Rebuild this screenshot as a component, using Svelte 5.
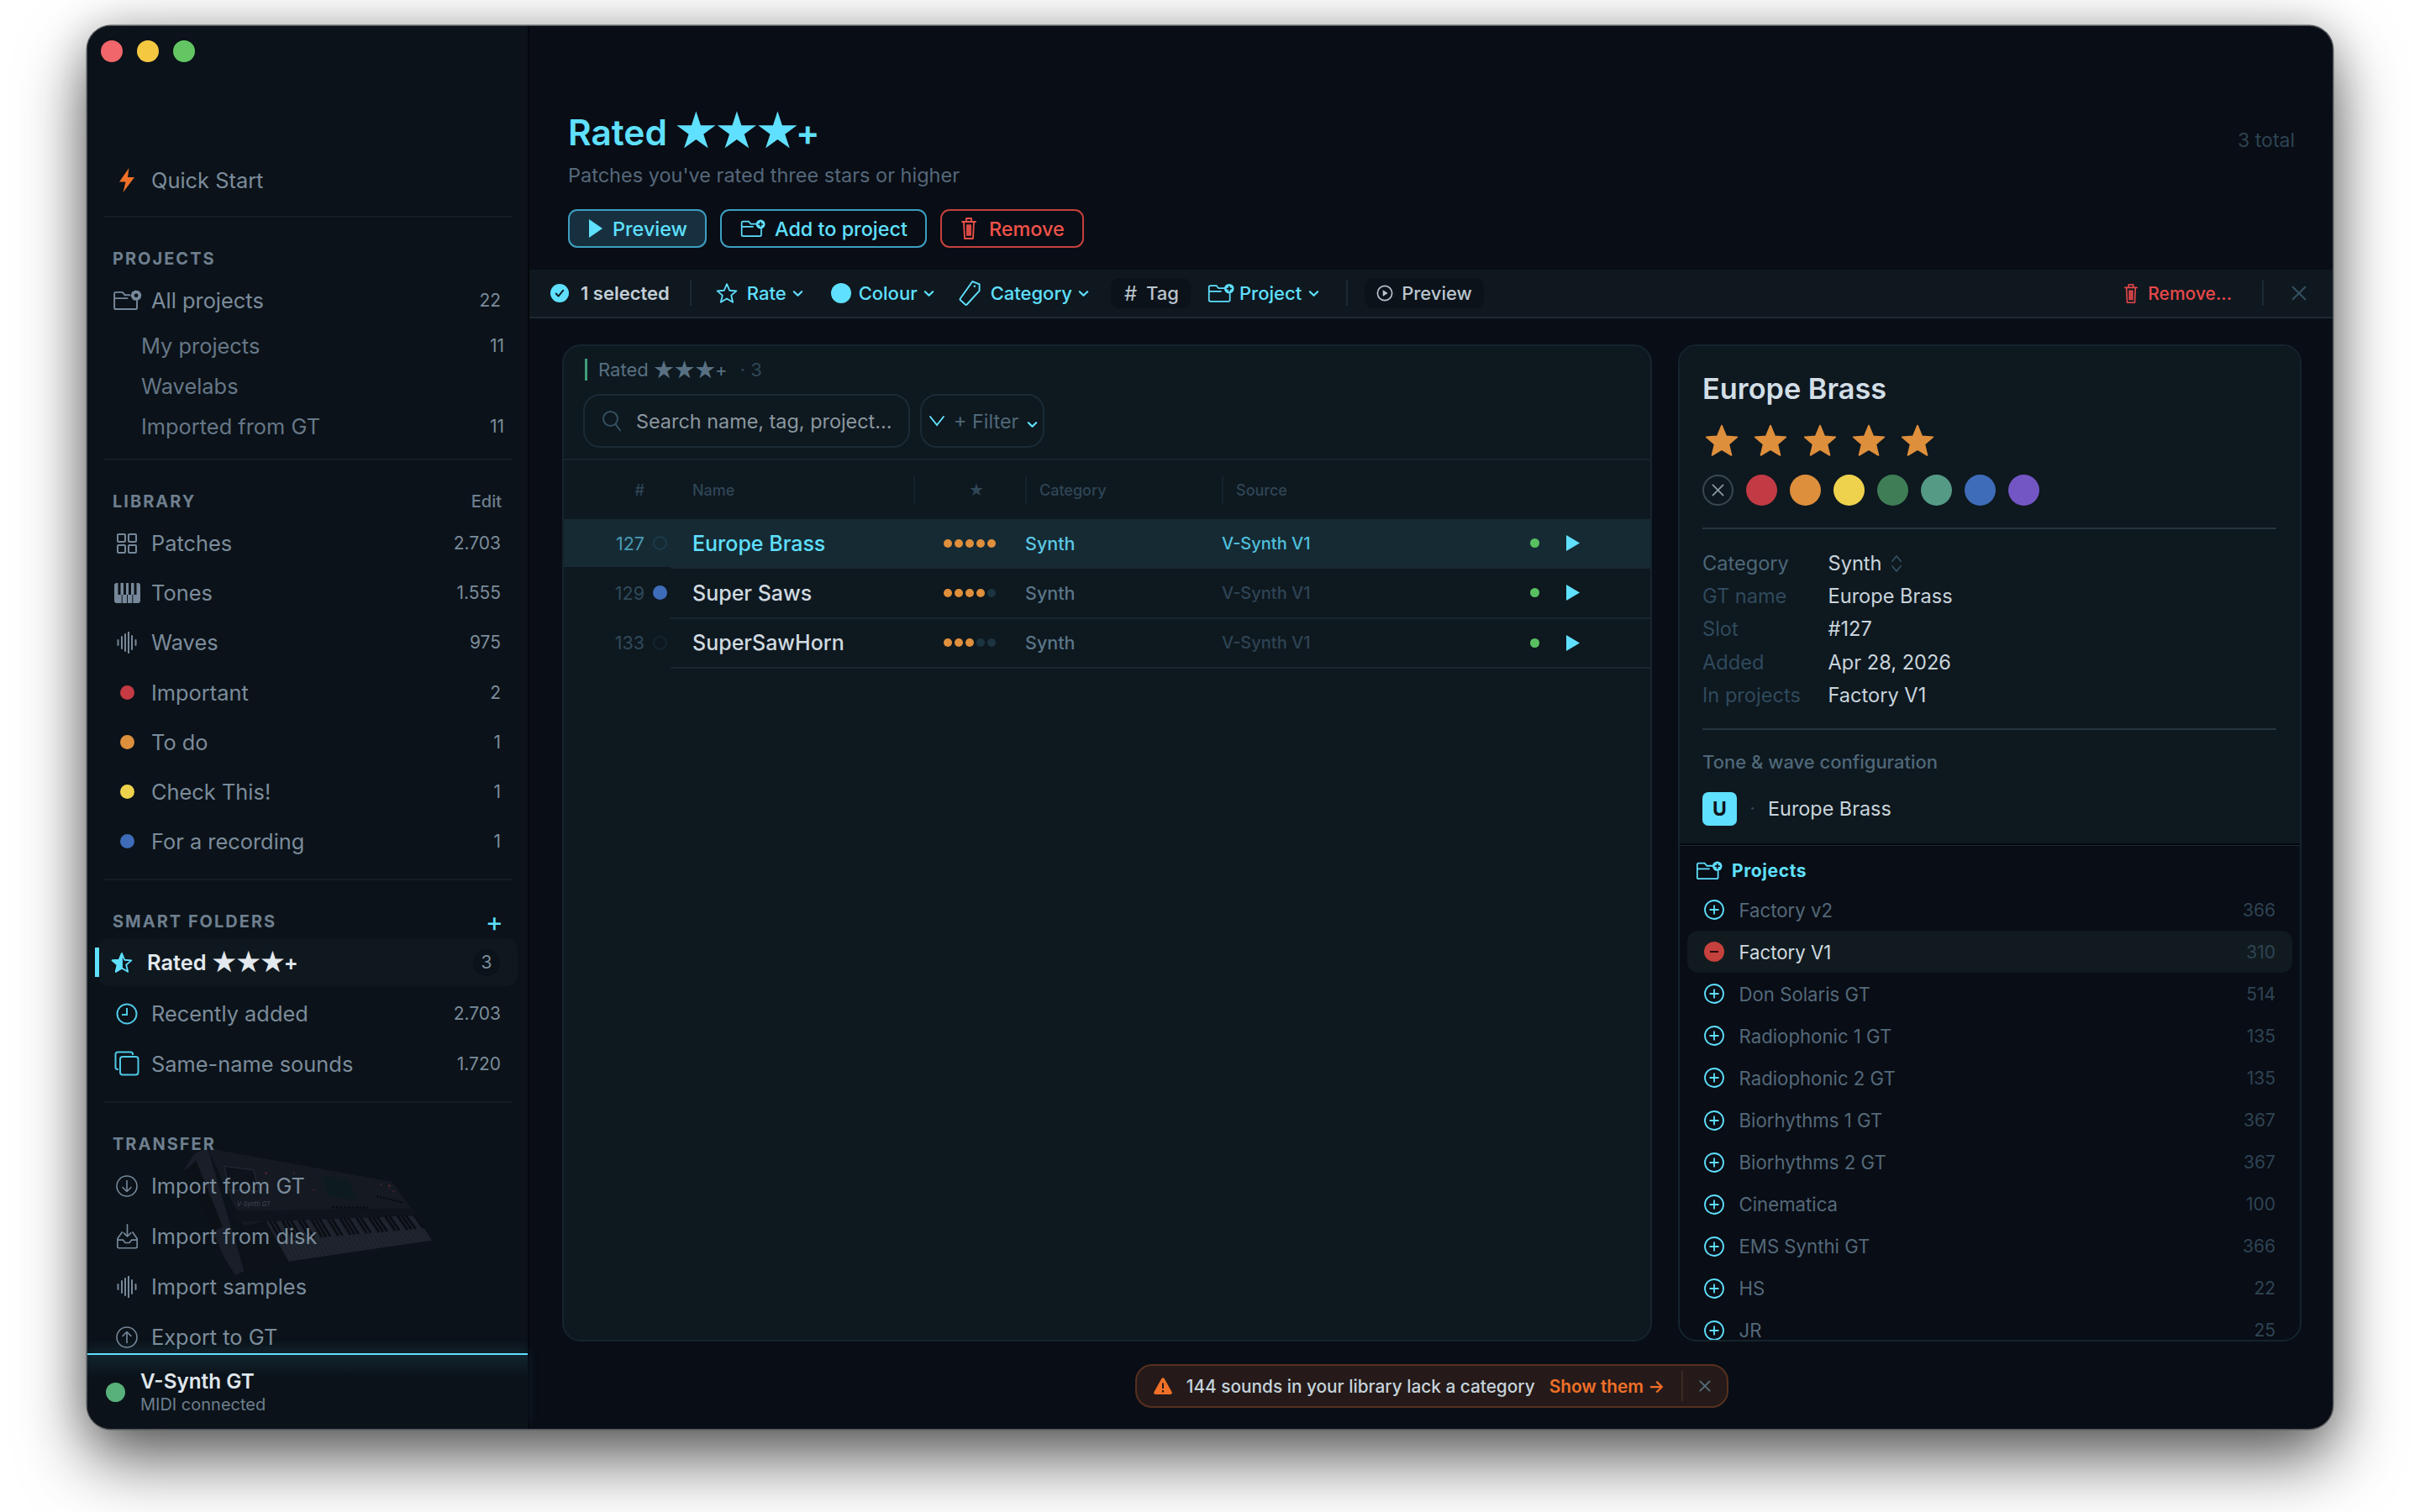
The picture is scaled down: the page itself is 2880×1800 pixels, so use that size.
<script>
	const projects = [
		{ name: 'My projects', count: '11' },
		{ name: 'Wavelabs', count: '' },
		{ name: 'Imported from GT', count: '11' }
	];
	const library = [
		{ name: 'Patches', count: '2.703', icon: 'grid' },
		{ name: 'Tones', count: '1.555', icon: 'piano' },
		{ name: 'Waves', count: '975', icon: 'wave' },
		{ name: 'Important', count: '2', dot: '#c63a44' },
		{ name: 'To do', count: '1', dot: '#de8f3c' },
		{ name: 'Check This!', count: '1', dot: '#eed24e' },
		{ name: 'For a recording', count: '1', dot: '#3f6cb8' }
	];
	const transfer = [
		{ name: 'Import from GT', icon: 'down' },
		{ name: 'Import from disk', icon: 'inbox' },
		{ name: 'Import samples', icon: 'wave' },
		{ name: 'Export to GT', icon: 'up' }
	];
	const patches = [
		{ slot: 127, name: 'Europe Brass', stars: 5, tag: '', active: true },
		{ slot: 129, name: 'Super Saws', stars: 4, tag: '#3f6cb8', active: false },
		{ slot: 133, name: 'SuperSawHorn', stars: 3, tag: '', active: false }
	];
	const swatches = ['#c23a44', '#de8f3c', '#eed24e', '#3f7d57', '#559a85', '#3f6cb8', '#7356c4'];
	const facts = [
		['Category', 'Synth'],
		['GT name', 'Europe Brass'],
		['Slot', '#127'],
		['Added', 'Apr 28, 2026'],
		['In projects', 'Factory V1']
	];
	const projectRows = [
		['Factory v2', 366],
		['Factory V1', 310],
		['Don Solaris GT', 514],
		['Radiophonic 1 GT', 135],
		['Radiophonic 2 GT', 135],
		['Biorhythms 1 GT', 367],
		['Biorhythms 2 GT', 367],
		['Cinematica', 100],
		['EMS Synthi GT', 366],
		['HS', 22],
		['JR', 25]
	];
	const blackKeys = Array.from({ length: 36 }, (_, i) => i).filter((i) => i % 7 !== 2 && i % 7 !== 6);
	const whiteKeys = Array.from({ length: 36 }, (_, i) => i);
</script>

{#snippet star(points = '12 2 15 9 22.5 9.6 16.8 14.4 18.6 22 12 18 5.4 22 7.2 14.4 1.5 9.6 9 9')}
	<polygon {points} />
{/snippet}

{#snippet chevron()}
	<svg class="chev" width="13" height="9" viewBox="0 0 14 9" fill="none" stroke="currentColor" stroke-width="2.4" stroke-linecap="round" stroke-linejoin="round"><path d="M2 2l5 5 5-5" /></svg>
{/snippet}

{#snippet cross(size, color)}
	<svg width={size} height={size} viewBox="0 0 16 16" fill="none" stroke={color} stroke-width="1.900" stroke-linecap="round"><path d="M1.500 1.500l13 13M14.500 1.500l-13 13" /></svg>
{/snippet}

{#snippet folder(w, h, badge)}
	<svg class="fold" width={w} height={h} viewBox="0 0 36 26" fill="none" stroke="currentColor" stroke-width="2">
		<path d="M2 5a2 2 0 0 1 2-2h8l3 3.5h9M30 14v8a2 2 0 0 1-2 2H4a2 2 0 0 1-2-2V5M2 10.5h16" stroke-linecap="round" />
		<circle cx="29" cy="7" r="6.5" fill="currentColor" stroke="none" />
		{#if badge === 'plus'}
			<path d="M29 3.6v6.8M25.6 7h6.8" stroke="#0b1219" stroke-width="2" />
		{:else}
			<circle cx="29" cy="7" r="2.4" fill="#0b1219" stroke="none" />
			<circle cx="29" cy="7" r="7" fill="none" stroke="#0b1219" stroke-width="1.2" stroke-dasharray="2 3.5" />
		{/if}
	</svg>
{/snippet}

{#snippet waveIcon()}
	<svg width="24" height="26" viewBox="0 0 24 26" fill="none" stroke="currentColor" stroke-width="2" stroke-linecap="round">
		<path d="M1.5 10v6M6 6v14M10 3v20M14 0.5v25M18 5v16M22.5 10v6" />
	</svg>
{/snippet}

{#snippet trash(w, h)}
	<svg width={w} height={h} viewBox="0 0 20 28" fill="none" stroke="currentColor" stroke-width="2" stroke-linejoin="round" stroke-linecap="round">
		<path d="M2 6h16M7 6V2h6v4M4 6l1 20h10l1-20M8 10v12M10 10v12M12 10v12" stroke-width="1.8" />
	</svg>
{/snippet}

{#snippet navIcon(name)}
	{#if name === 'grid'}
		<svg width="24" height="24" viewBox="0 0 24 24" fill="none" stroke="currentColor" stroke-width="2"><rect x="1" y="1" width="9" height="9" rx="1" /><rect x="14" y="1" width="9" height="9" rx="1" /><rect x="1" y="14" width="9" height="9" rx="1" /><rect x="14" y="14" width="9" height="9" rx="1" /></svg>
	{:else if name === 'piano'}
		<svg width="31" height="24" viewBox="0 0 31 24"><rect width="31" height="24" rx="3" fill="currentColor" /><path d="M6 0v14M12.5 0v14M18.5 0v14M25 0v14" stroke="#0b1219" stroke-width="3" /><path d="M9.2 14v10M15.5 14v10M21.8 14v10" stroke="#0b1219" stroke-width="1" /></svg>
	{:else if name === 'wave'}
		{@render waveIcon()}
	{:else if name === 'clock'}
		<svg width="26" height="26" viewBox="0 0 26 26" fill="none" stroke="currentColor" stroke-width="2"><circle cx="13" cy="13" r="11.5" /><path d="M13 6v8H7" /></svg>
	{:else if name === 'copies'}
		<svg width="30" height="30" viewBox="0 0 30 30" fill="none" stroke="currentColor" stroke-width="2"><path d="M5 22H4a2.5 2.5 0 0 1-2.5-2.5V4A2.5 2.5 0 0 1 4 1.5h15.5A2.5 2.5 0 0 1 22 4v1" /><rect x="7" y="7" width="21.5" height="21.5" rx="3" /></svg>
	{:else if name === 'down' || name === 'up'}
		<svg width="26" height="26" viewBox="0 0 26 26" fill="none" stroke="currentColor" stroke-width="1.6" stroke-linecap="round" stroke-linejoin="round"><circle cx="13" cy="13" r="12" /><path d={name === 'down' ? 'M13 6.5v13M8 14.5l5 5 5-5' : 'M13 19.5v-13M8 11.5l5-5 5 5'} /></svg>
	{:else if name === 'inbox'}
		<svg width="31" height="30" viewBox="0 0 31 36" fill="none" stroke="currentColor" stroke-width="2" stroke-linejoin="round" stroke-linecap="round"><path d="M15.5 1v17M10.5 13l5 5 5-5M8 12L1.500 21v11.500a2 2 0 0 0 2 2h24a2 2 0 0 0 2-2V21l-6.500-9M1.500 23h8l3 4h6l3-4h8" /></svg>
	{/if}
{/snippet}

<div class="window">
	<aside class="sidebar">
		<svg class="synth" width="330" height="190" viewBox="0 0 990 570" aria-hidden="true">
			<polygon points="140,50 800,170 885,290 350,312 270,330" fill="#151a23" />
			<polygon points="58,125 95,70 140,48 272,490 240,505 200,440" fill="#1b202a" />
			<polygon points="60,130 100,95 195,330 160,350" fill="#0d1118" />
			<polygon points="270,330 350,312 430,455 272,490" fill="#0e1219" />
			<polygon points="350,312 885,290 942,380 430,455" fill="#222731" />
			<polygon points="230,275 880,265 885,292 350,312 240,312" fill="#10141c" />
			<polygon points="200,115 305,128 325,205 220,200" fill="#0f141c" stroke="#2a303b" stroke-width="3" />
			<polygon points="550,150 645,165 670,235 575,222" fill="#0e1c20" />
			<g stroke="#171c25" stroke-width="2">
				{#each whiteKeys as i}
					<line x1={356 + i * 14.7} y1={311 - i * 0.6} x2={432 + i * 14.4} y2={453 - i * 2} />
				{/each}
			</g>
			<g stroke="#0a0d13" stroke-width="8">
				{#each blackKeys as i}
					<line x1={364 + i * 14.7} y1={311 - i * 0.6} x2={405 + i * 14.5} y2={382 - i * 1.3} />
				{/each}
			</g>
			<g fill="#5b2a30">
				<circle cx="350" cy="140" r="4" /><circle cx="450" cy="140" r="3" /><circle cx="520" cy="200" r="3" /><circle cx="790" cy="185" r="4" /><circle cx="805" cy="205" r="3" /><circle cx="760" cy="180" r="3" />
			</g>
			<g stroke="#070a0f" stroke-width="7">
				<line x1="585" y1="262" x2="715" y2="264" stroke-dasharray="8 6" />
				<line x1="745" y1="222" x2="840" y2="245" stroke-dasharray="6 6" />
			</g>
			<text x="245" y="258" fill="#4a505c" font-family="Inter, sans-serif" font-size="22" font-style="italic">V-Synth GT</text>
		</svg>

		<nav class="nav">
			<div class="traffic"><span class="red"></span><span class="amber"></span><span class="green"></span></div>
			<div class="row quick">
				<span class="ico">
					<svg width="18" height="29" viewBox="0 0 18 29"><polygon points="11.500,0 0,16.500 7.500,16.500 4.500,29 18,11 10,11" fill="#f07028" /></svg>
				</span>
				<span class="label">Quick Start</span>
			</div>
			<div class="rule"></div>

			<div class="head first"><span>PROJECTS</span></div>
			<div class="row allp">
				<span class="ico">{@render folder(35, 25, 'gear')}</span>
				<span class="label">All projects</span>
				<span class="count">22</span>
			</div>
			{#each projects as p}
				<div class="row sub">
					<span class="label">{p.name}</span>
					<span class="count">{p.count}</span>
				</div>
			{/each}
			<div class="rule"></div>

			<div class="head"><span>LIBRARY</span><span class="edit">Edit</span></div>
			{#each library as item}
				<div class="row">
					<span class="ico">
						{#if item.dot}
							<span class="dot" style="background:{item.dot}"></span>
						{:else}
							{@render navIcon(item.icon)}
						{/if}
					</span>
					<span class="label">{item.name}</span>
					<span class="count">{item.count}</span>
				</div>
			{/each}
			<div class="rule"></div>

			<div class="head"><span>SMART FOLDERS</span><span class="plus">+</span></div>
			<div class="row rated">
				<span class="bar"></span>
				<svg class="rated-ico" width="26" height="26" viewBox="0 0 24 24" fill="none" stroke="currentColor" stroke-width="1.700" stroke-linejoin="round">
					<polygon points="12 2 12 18 5.400 22 7.200 14.400 1.500 9.600 9 9" fill="currentColor" />
					{@render star()}
				</svg>
				<span class="label">Rated <span class="st st-side">★★★</span>+</span>
				<span class="pill">3</span>
			</div>
			<div class="row">
				<span class="ico cyan">{@render navIcon('clock')}</span>
				<span class="label">Recently added</span>
				<span class="count">2.703</span>
			</div>
			<div class="row">
				<span class="ico cyan">{@render navIcon('copies')}</span>
				<span class="label">Same-name sounds</span>
				<span class="count">1.720</span>
			</div>
			<div class="rule"></div>

			<div class="head"><span>TRANSFER</span></div>
			{#each transfer as item}
				<div class="row tall">
					<span class="ico">{@render navIcon(item.icon)}</span>
					<span class="label">{item.name}</span>
				</div>
			{/each}
		</nav>

		<footer class="device">
			<span class="led"></span>
			<div>
				<div class="device-name">V-Synth GT</div>
				<div class="device-state">MIDI connected</div>
			</div>
		</footer>
	</aside>

	<main class="main">
		<header class="top">
			<div>
				<h1>Rated <span class="st st-title">★★★</span>+</h1>
				<p class="sub-title">Patches you've rated three stars or higher</p>
				<div class="actions">
					<button class="btn primary">
						<svg width="18" height="24" viewBox="0 0 18 24"><polygon points="1,1 17,12 1,23" fill="currentColor" /></svg>
						Preview
					</button>
					<button class="btn">{@render folder(30, 22, 'plus')} Add to project</button>
					<button class="btn danger">{@render trash(20, 28)} Remove</button>
				</div>
			</div>
			<span class="total">3 total</span>
		</header>

		<div class="toolbar">
			<svg width="22" height="22" viewBox="0 0 23 23"><circle cx="11.500" cy="11.500" r="11.500" fill="#5fe0ff" /><path d="M7 12l3 3.200L16 8" fill="none" stroke="#0e181f" stroke-width="2" stroke-linecap="round" stroke-linejoin="round" /></svg>
			<span class="selected">1 selected</span>
			<span class="sep"></span>
			<span class="tool t-rate">
				<svg width="26" height="26" viewBox="0 0 24 24" fill="none" stroke="currentColor" stroke-width="1.700" stroke-linejoin="round">{@render star()}</svg>
				Rate {@render chevron()}
			</span>
			<span class="tool t-colour"><span class="swatch"></span>Colour {@render chevron()}</span>
			<span class="tool t-cat">
				<svg width="27" height="32" viewBox="0 0 28 32" fill="none" stroke="currentColor" stroke-width="2" stroke-linejoin="round"><path d="M17 1.500l8.500 3.500v8L10 30a1.500 1.500 0 0 1-2 0l-6-5.500a1.500 1.500 0 0 1 0-2z" /><circle cx="19.500" cy="7.500" r="1.300" fill="currentColor" stroke="none" /></svg>
				Category {@render chevron()}
			</span>
			<span class="tool chip t-tag"><span class="hash">#</span>Tag</span>
			<span class="tool t-proj">{@render folder(32, 24, 'plus')}Project {@render chevron()}</span>
			<span class="sep s2"></span>
			<span class="tool chip t-prev">
				<svg width="20" height="20" viewBox="0 0 22 22" fill="none" stroke="currentColor" stroke-width="1.800"><circle cx="11" cy="11" r="9.500" /><polygon points="8.500,6.800 15,11 8.500,15.200" fill="currentColor" stroke="none" /></svg>
				Preview
			</span>
			<span class="tool t-remove">{@render trash(18, 25)} Remove...</span>
			<span class="sep s3"></span>
			<span class="close">{@render cross(18, '#33505f')}</span>
		</div>

		<div class="content">
			<div class="panes">
				<section class="card list">
					<div class="crumb"><span class="crumb-bar"></span>Rated <span class="st st-crumb">★★★</span>+ <span class="crumb-n">· 3</span></div>
					<div class="search-row">
						<div class="search">
							<svg width="24" height="26" viewBox="0 0 24 26" fill="none" stroke="#33505f" stroke-width="2" stroke-linecap="round"><circle cx="10.500" cy="10.500" r="8.500" /><path d="M17 17.500l5 7" /></svg>
							<span>Search name, tag, project...</span>
						</div>
						<div class="filter">
							<svg width="20" height="14" viewBox="0 0 20 14" fill="none" stroke="#5fe0ff" stroke-width="2" stroke-linecap="round"><path d="M2 2l8 10 8-10" /></svg>
							<span>+ Filter</span>
							<span class="cyan">{@render chevron()}</span>
						</div>
					</div>
					<div class="thead">
						<span class="th-n">#</span>
						<span class="th-name">Name</span>
						<span class="th sep-l th-star"><span class="st">★</span></span>
						<span class="th sep-l">Category</span>
						<span class="th sep-l">Source</span>
					</div>
					{#each patches as p}
						<div class="patch" class:active={p.active}>
							<span class="slot">{p.slot}</span>
							<span class="tag-cell">
								<span class="tag-dot" class:ring={!p.tag} style={p.tag ? `background:${p.tag}` : ''}></span>
							</span>
							<span class="pname">{p.name}</span>
							<span class="rating">
								{#each [1, 2, 3, 4, 5] as n}
									<span class="pip" class:on={n <= p.stars}></span>
								{/each}
							</span>
							<span class="pcat">Synth</span>
							<span class="psource">V-Synth V1</span>
							<span class="online"></span>
							<svg width="16" height="19" viewBox="0 0 16 19"><polygon points="0,0 16,9.500 0,19" fill="#5fe0ff" /></svg>
						</div>
					{/each}
				</section>

				<section class="card detail">
					<div class="detail-top">
						<h2>Europe Brass</h2>
						<div class="stars">
							{#each [1, 2, 3, 4, 5] as n}
								<svg width="42" height="40" viewBox="0 0 24 23" fill="#de8f3c" stroke="#de8f3c" stroke-width="1" stroke-linejoin="round">{@render star('12 1.500 15 8.800 22.500 9.400 16.800 14.300 18.600 21.800 12 17.800 5.400 21.800 7.200 14.300 1.500 9.400 9 8.800')}</svg>
							{/each}
						</div>
						<div class="swatches">
							<span class="sw none">{@render cross(15, '#8a97a0')}</span>
							{#each swatches as c}
								<span class="sw" style="background:{c}"></span>
							{/each}
						</div>
						<div class="hr"></div>
						<dl class="facts">
							{#each facts as [k, v], i}
								<div class="fact">
									<dt class:lit={i === 0}>{k}</dt>
									<dd>
										{v}
										{#if i === 0}
											<svg width="14" height="22" viewBox="0 0 14 22" fill="none" stroke="#33505f" stroke-width="1.800" stroke-linecap="round" stroke-linejoin="round"><path d="M2 8l5-6 5 6M2 14l5 6 5-6" /></svg>
										{/if}
									</dd>
								</div>
							{/each}
						</dl>
						<div class="hr second"></div>
						<div class="tone-title">Tone &amp; wave configuration</div>
						<div class="tone">
							<span class="badge">U</span>
							<span class="mid">·</span>
							<span>Europe Brass</span>
						</div>
					</div>
					<div class="detail-projects">
						<div class="proj-head">{@render folder(32, 23, 'plus')}<span>Projects</span></div>
						{#each projectRows as [name, n], i}
							<div class="proj" class:in={i === 1}>
								{#if i === 1}
									<svg width="24" height="24" viewBox="0 0 24 24"><circle cx="12" cy="12" r="12" fill="#c5413d" /><path d="M7 12h10" stroke="#2a0c0c" stroke-width="2" /></svg>
								{:else}
									<svg width="24" height="24" viewBox="0 0 24 24" fill="none" stroke="#5fe0ff" stroke-width="1.800"><circle cx="12" cy="12" r="11" /><path d="M12 6.500v11M6.500 12h11" /></svg>
								{/if}
								<span class="proj-name">{name}</span>
								<span class="proj-n">{n}</span>
							</div>
						{/each}
					</div>
				</section>
			</div>

			<div class="toast">
				<svg width="22" height="20" viewBox="0 0 22 20"><path d="M9.300 1.200a2 2 0 0 1 3.400 0l8.800 15.800A2 2 0 0 1 19.800 20H2.200a2 2 0 0 1-1.700-3z" fill="#f07028" /><path d="M11 6.500v6.500M11 15v2.500" stroke="#251a19" stroke-width="2" /></svg>
				<span class="toast-text">144 sounds in your library lack a category</span>
				<span class="toast-link">Show them →</span>
				<span class="toast-sep"></span>
				<span class="toast-x">{@render cross(14, '#56707f')}</span>
			</div>
		</div>
	</main>
</div>

<style>
	:global(body) {
		margin: 0;
		background: #fff;
		height: 1800px;
		overflow: hidden;
		font-family: Inter, 'Noto Sans', sans-serif;
	}

	.window {
		display: flex;
		box-sizing: border-box;
		width: 2672px;
		height: 1670px;
		margin: 31px 0 0 104px;
		border-radius: 28px;
		overflow: hidden;
		background: #090d15;
		box-shadow:
			0 0 0 1.5px #55585c,
			0 36px 80px rgba(0, 0, 0, 0.62),
			0 0 50px rgba(0, 0, 0, 0.2);
	}

	/* star glyphs come from DejaVu, Inter's are too small */
	.st {
		font-family: 'DejaVu Sans', sans-serif;
		font-weight: 400;
		line-height: 0;
	}

	.st-title {
		font-size: 60px;
		letter-spacing: -5.3px;
		vertical-align: -3px;
		margin-left: -3px;
	}

	.st-side {
		font-size: 35px;
		letter-spacing: -2.5px;
		vertical-align: -2px;
		margin-left: -1px;
	}

	.st-crumb {
		font-size: 29px;
		letter-spacing: -1.3px;
		vertical-align: -2px;
		margin-left: -1px;
	}

	/* sidebar */
	.sidebar {
		position: relative;
		flex: none;
		display: flex;
		flex-direction: column;
		box-sizing: border-box;
		width: 526px;
		background: #0b1219;
		border-right: 2px solid #04070b;
		color: #76889a;
	}

	.synth {
		position: absolute;
		left: 96px;
		top: 1319px;
		opacity: 0.9;
		pointer-events: none;
	}

	.nav {
		position: relative;
		flex: 1;
		min-height: 0;
		overflow: hidden;
		box-sizing: border-box;
		padding: 17px 28px 0 30px;
	}

	.traffic {
		display: flex;
		gap: 17px;
		height: 26px;
		margin: 0 0 112px -14px;
	}

	.traffic span {
		width: 26px;
		height: 26px;
		border-radius: 50%;
	}

	.red {
		background: #f0666a;
	}

	.amber {
		background: #f5c842;
	}

	.green {
		background: #63c663;
	}

	.row {
		display: flex;
		align-items: center;
		height: 59.2px;
		padding-right: 4px;
		font-size: 25.4px;
		color: #7b8c9b;
	}

	.quick {
		height: 56px;
		margin-bottom: 1px;
	}

	.allp {
		height: 60px;
		margin-top: 5px;
	}

	.sub {
		height: 48px;
		padding-left: 34px;
		padding-right: 0;
		color: #667787;
	}

	.tall {
		height: 60px;
	}

	.ico {
		flex: none;
		display: flex;
		align-items: center;
		justify-content: center;
		width: 34px;
		margin-right: 12px;
		color: #76889a;
	}

	.ico.cyan {
		color: #4fc8e6;
	}

	.label {
		flex: 1;
		white-space: nowrap;
	}

	.count {
		font-size: 21px;
		color: #7b8c9b;
	}

	.dot {
		width: 17px;
		height: 17px;
		border-radius: 50%;
	}

	.rule {
		height: 2px;
		margin: 15px -10px 0 -11px;
		background: #141c24;
	}

	.head {
		display: flex;
		align-items: center;
		justify-content: space-between;
		box-sizing: border-box;
		height: 30px;
		margin: 33px 0 6px;
		padding: 2px 3px 0 0;
		font-size: 20px;
		font-weight: 700;
		letter-spacing: 2px;
		color: #6e7f8f;
	}

	.head.first {
		margin-bottom: 0;
	}

	.edit {
		font-size: 20px;
		font-weight: 500;
		letter-spacing: 0;
	}

	.plus {
		margin-right: -2px;
		font-size: 32px;
		font-weight: 400;
		letter-spacing: 0;
		color: #5fe0ff;
	}

	.rated {
		position: relative;
		box-sizing: border-box;
		height: 57px;
		margin: 0 -16px 3px -18px;
		padding: 0 21px 0 16px;
		border-radius: 14px;
		background: #0f181f;
		color: #e3e9ef;
		font-weight: 600;
	}

	.bar {
		position: absolute;
		left: -3px;
		top: 11px;
		width: 5px;
		height: 35px;
		background: #5fe0ff;
	}

	.rated-ico {
		flex: none;
		margin-right: 17px;
		color: #5fe0ff;
	}

	.pill {
		display: flex;
		align-items: center;
		justify-content: center;
		width: 32px;
		height: 32px;
		border-radius: 50%;
		background: #0b1219;
		font-size: 21px;
		font-weight: 400;
		color: #7b8c9b;
	}

	.device {
		position: relative;
		flex: none;
		display: flex;
		align-items: center;
		box-sizing: border-box;
		height: 90px;
		padding: 0 0 0 22px;
		border-top: 2px solid #5fe0ff;
		background: linear-gradient(180deg, #12252f, #0b1219 26px);
		box-shadow: 0 -6px 14px rgba(95, 224, 255, 0.1);
	}

	.led {
		width: 23px;
		height: 23px;
		margin-right: 18px;
		border-radius: 50%;
		background: #58b07a;
	}

	.device-name {
		font-size: 24.3px;
		font-weight: 600;
		color: #dfe6ec;
		line-height: 30px;
	}

	.device-state {
		font-size: 20px;
		color: #6d7e8d;
		line-height: 26px;
	}

	/* main column */
	.main {
		flex: 1;
		min-width: 0;
		display: flex;
		flex-direction: column;
	}

	.top {
		flex: none;
		display: flex;
		justify-content: space-between;
		box-sizing: border-box;
		height: 290px;
		padding: 101px 45px 0 46px;
	}

	h1 {
		margin: 0;
		font-size: 42.4px;
		line-height: 52px;
		font-weight: 600;
		color: #5fe0ff;
		white-space: nowrap;
	}

	.sub-title {
		margin: 9px 0 0;
		font-size: 23.5px;
		line-height: 32px;
		color: #55687a;
	}

	.actions {
		display: flex;
		gap: 16px;
		margin-top: 24px;
	}

	.btn {
		display: flex;
		align-items: center;
		gap: 11px;
		box-sizing: border-box;
		height: 46px;
		padding: 0 21px 0 22px;
		border: 2px solid #3d9fc0;
		border-radius: 11px;
		background: transparent;
		font: 500 23.4px Inter, sans-serif;
		color: #5fe0ff;
		white-space: nowrap;
	}

	.btn.primary {
		background: #17303f;
	}

	.btn.danger {
		gap: 14px;
		border-color: #c5413d;
		color: #f0524a;
	}

	.total {
		margin-top: 20px;
		font-size: 23px;
		line-height: 30px;
		color: #2d4352;
	}

	.toolbar {
		flex: none;
		display: flex;
		align-items: center;
		box-sizing: border-box;
		height: 58px;
		padding: 0 31px 0 25px;
		background: #0f181f;
		border-bottom: 2px solid #1e2a33;
		font-size: 22px;
		font-weight: 500;
	}

	.selected {
		margin-left: 14px;
		color: #c3ced6;
		font-weight: 600;
	}

	.sep {
		flex: none;
		width: 2px;
		height: 30px;
		margin-left: 24px;
		background: #1c2a33;
	}

	.tool {
		display: flex;
		align-items: center;
		gap: 11px;
		color: #5fe0ff;
		white-space: nowrap;
	}

	.chev {
		flex: none;
		margin-left: -4px;
	}

	.fold {
		flex: none;
	}

	.swatch {
		width: 24px;
		height: 24px;
		margin-right: -2px;
		border-radius: 50%;
		background: #5fe0ff;
	}

	.t-rate {
		margin-left: 29px;
	}

	.t-colour {
		margin-left: 33px;
	}

	.t-cat {
		margin-left: 29px;
	}

	.chip {
		height: 36px;
		padding: 0 14px 0 16px;
		border-radius: 10px;
		background: #0b1219;
		color: #b9c5cd;
	}

	.t-tag {
		margin-left: 26px;
	}

	.hash {
		font-weight: 400;
		font-size: 24px;
	}

	.t-proj {
		margin-left: 20px;
		gap: 6px;
	}

	.t-proj .chev {
		margin-left: 2px;
	}

	.s2 {
		margin-left: 32px;
	}

	.t-prev {
		margin-left: 20px;
		gap: 10px;
		padding: 0 14px;
	}

	.t-remove {
		margin-left: auto;
		gap: 11px;
		font-size: 21px;
		color: #e8484a;
	}

	.s3 {
		margin-left: 36px;
	}

	.close {
		display: flex;
		margin-left: 33px;
	}

	.content {
		flex: 1;
		min-height: 0;
		display: flex;
		flex-direction: column;
		padding: 31px 37px 25px 39px;
	}

	.panes {
		flex: 1;
		min-height: 0;
		display: flex;
		gap: 31px;
	}

	.card {
		box-sizing: border-box;
		border: 2px solid #15242e;
		border-radius: 22px;
		overflow: hidden;
	}

	/* patch list */
	.list {
		flex: 1;
		min-width: 0;
		background: #0e181f;
	}

	.crumb {
		display: flex;
		align-items: center;
		height: 26px;
		margin: 15px 0 0 25px;
		font-size: 22px;
		color: #587082;
		white-space: pre;
	}

	.crumb-bar {
		width: 3px;
		height: 26px;
		margin-right: 13px;
		background: #3f9f7a;
	}

	.crumb-n {
		margin-left: 9px;
		color: #2f4656;
	}

	.search-row {
		display: flex;
		gap: 12px;
		height: 64px;
		margin-top: 16px;
		padding: 0 0 13px 23px;
		border-bottom: 2px solid #16232c;
	}

	.search,
	.filter {
		display: flex;
		align-items: center;
		box-sizing: border-box;
		border: 2px solid #1a2b36;
		border-radius: 20px;
		font-size: 23.4px;
		white-space: nowrap;
	}

	.search {
		gap: 17px;
		width: 389px;
		padding-left: 20px;
		color: #8b979f;
	}

	.filter {
		gap: 10px;
		width: 148px;
		padding-left: 8px;
		color: #4f6878;
	}

	.filter .cyan {
		margin-left: 4px;
	}

	.cyan {
		color: #5fe0ff;
	}

	.thead {
		display: grid;
		grid-template-columns: 96px 57px 263px 133px 234px 1fr;
		align-items: center;
		height: 70px;
		font-size: 18px;
		font-weight: 500;
		color: #2f4656;
	}

	.th-n {
		text-align: right;
	}

	.th-name {
		grid-column: 3;
	}

	.th {
		height: 33px;
		line-height: 33px;
		padding-left: 15px;
		border-left: 2px solid #15232c;
	}

	.th-star {
		text-align: center;
		font-size: 20px;
	}

	.patch {
		position: relative;
		display: grid;
		grid-template-columns: 96px 36px 319px 98px 234px 367px 43px 16px;
		align-items: center;
		height: 59.3px;
		padding-bottom: 2px;
		box-sizing: border-box;
		color: #d0dae0;
	}

	.patch::after {
		content: '';
		position: absolute;
		left: 127px;
		right: 0;
		bottom: 0;
		height: 2px;
		background: #1a262e;
	}

	.patch.active {
		background: linear-gradient(#162a34, #162a34) no-repeat 0 0 / 100% 57.300px;
		color: #5fe0ff;
	}

	.slot {
		text-align: right;
		font-size: 21.5px;
		color: #2f4a5a;
	}

	.active .slot {
		color: #4a9cb5;
	}

	.tag-cell {
		display: flex;
		justify-content: center;
	}

	.tag-dot {
		box-sizing: border-box;
		width: 17px;
		height: 17px;
		border-radius: 50%;
	}

	.tag-dot.ring {
		border: 2px solid #14242e;
	}

	.active .tag-dot.ring {
		border-color: #1c3a48;
	}

	.pname {
		padding-left: 21px;
		font-size: 25px;
		font-weight: 500;
	}

	.rating {
		display: flex;
		gap: 3px;
		padding-left: 1px;
	}

	.pip {
		width: 10px;
		height: 10px;
		border-radius: 50%;
		background: #1c3440;
	}

	.pip.on {
		background: #e08f3c;
	}

	.pcat {
		font-size: 21.5px;
		font-weight: 500;
		color: #5a7688;
	}

	.active .pcat {
		color: #5cc8e4;
	}

	.psource {
		font-size: 20px;
		font-weight: 500;
		color: #2e4454;
	}

	.active .psource {
		color: #4fc0dc;
	}

	.online {
		width: 11px;
		height: 11px;
		border-radius: 50%;
		background: #58c060;
	}

	/* detail */
	.detail {
		flex: none;
		display: flex;
		flex-direction: column;
		width: 742px;
	}

	.detail-top {
		flex: none;
		box-sizing: border-box;
		height: 592px;
		padding: 29px 28px 0 27px;
		background: #0e181f;
	}

	h2 {
		margin: 0;
		font-size: 34.3px;
		line-height: 44px;
		font-weight: 600;
		color: #d2dee6;
	}

	.stars {
		display: flex;
		gap: 16.300px;
		margin: 19px 0 0 2px;
	}

	.swatches {
		display: flex;
		align-items: center;
		gap: 15px;
		margin-top: 21px;
	}

	.sw {
		flex: none;
		width: 37px;
		height: 37px;
		border-radius: 50%;
	}

	.sw.none {
		display: flex;
		align-items: center;
		justify-content: center;
		box-sizing: border-box;
		border: 2px solid #3a4750;
	}

	.hr {
		height: 2px;
		margin-top: 26px;
		background: #253540;
	}

	.facts {
		margin: 21px 0 0;
	}

	.fact {
		display: flex;
		align-items: center;
		height: 39.200px;
		font-size: 23.6px;
	}

	dt {
		width: 149.500px;
		color: #2f4a5c;
	}

	dt.lit {
		color: #4d6878;
	}

	dd {
		display: flex;
		align-items: center;
		gap: 10px;
		margin: 0;
		color: #c8d4dc;
	}

	.hr.second {
		margin-top: 20px;
	}

	.tone-title {
		margin-top: 23px;
		font-size: 22px;
		line-height: 30px;
		font-weight: 500;
		color: #4f6879;
	}

	.tone {
		display: flex;
		align-items: center;
		height: 40px;
		margin-top: 21px;
		font-size: 23.4px;
		color: #c8d4dc;
	}

	.badge {
		display: flex;
		align-items: center;
		justify-content: center;
		width: 41px;
		height: 40px;
		border-radius: 7px;
		background: #5fe0ff;
		font-size: 23px;
		font-weight: 700;
		color: #0b1219;
	}

	.mid {
		width: 37px;
		text-align: center;
		color: #2f4656;
	}

	.detail-projects {
		flex: 1;
		min-height: 0;
		overflow: hidden;
		border-top: 2px solid #04070b;
		box-shadow: inset 0 1px 0 #1e2a33;
		padding: 15px 9px 0;
	}

	.proj-head {
		display: flex;
		align-items: center;
		gap: 11px;
		height: 30px;
		padding-left: 10px;
		margin-bottom: 7px;
		font-size: 21px;
		font-weight: 700;
		letter-spacing: 0.6px;
		color: #5fe0ff;
	}

	.proj {
		display: flex;
		align-items: center;
		height: 50.100px;
		padding: 0 20px;
		box-sizing: border-box;
		font-size: 22.2px;
		color: #54697a;
	}

	.proj.in {
		border-radius: 13px;
		background: #111b1f;
		color: #d0dae0;
	}

	.proj-name {
		flex: 1;
		margin-left: 17.5px;
	}

	.proj-n {
		font-size: 21px;
		color: #2e4454;
	}

	/* notice */
	.toast {
		display: flex;
		align-items: center;
		align-self: center;
		box-sizing: border-box;
		height: 52px;
		margin-top: 27px;
		padding: 0 19px 0 20px;
		border: 2px solid #56301f;
		border-radius: 20px;
		background: #251a19;
		font-size: 20.8px;
		font-weight: 500;
		white-space: nowrap;
	}

	.toast-text {
		margin-left: 17px;
		color: #c5d3db;
	}

	.toast-link {
		margin-left: 17px;
		font-weight: 600;
		color: #f07028;
	}

	.toast-sep {
		width: 2px;
		height: 36px;
		margin-left: 20px;
		background: #3a2a24;
	}

	.toast-x {
		display: flex;
		margin-left: 19px;
	}
</style>
